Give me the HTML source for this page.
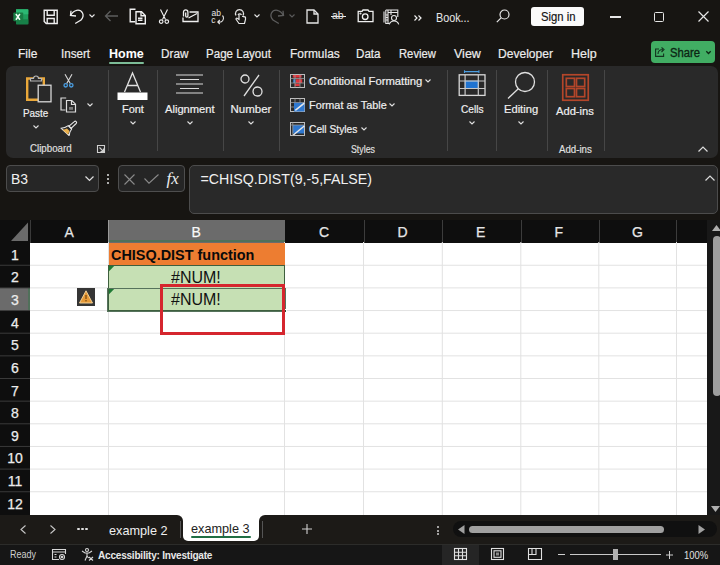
<!DOCTYPE html>
<html><head><meta charset="utf-8">
<style>
*{margin:0;padding:0;box-sizing:border-box}
html,body{width:720px;height:565px;overflow:hidden;background:#171512;font-family:"Liberation Sans",sans-serif;color:#e8e8e8}
.a{position:absolute}
.t{position:absolute;white-space:nowrap;line-height:1;transform-origin:0 0}
svg{position:absolute;overflow:visible}
.tab{font-size:12.5px;color:#ececec;top:48px;-webkit-text-stroke:.2px #ececec}
.rl{font-size:11.5px;color:#efefef;-webkit-text-stroke:.2px #efefef}
.gl{font-size:11px;color:#e2e2e2;-webkit-text-stroke:.15px #e2e2e2}
.sep{position:absolute;width:1px;background:#464646;top:70px;height:81px}
.ch{font-size:14px;color:#e6e6e6;top:225px;-webkit-text-stroke:.25px #e6e6e6}
.rh{position:absolute;left:0;width:30px;font-size:14px;color:#ececec;text-align:center;line-height:22.65px;padding-top:1px;-webkit-text-stroke:.25px #ececec}
</style></head><body>

<!-- ============ TITLE BAR ============ -->
<!-- excel logo -->
<svg style="left:13px;top:8.5px" width="16" height="16" viewBox="0 0 16 16">
  <rect x="3" y="0.3" width="12.3" height="15" rx="1" fill="#1f9d5c"/>
  <rect x="3" y="0.3" width="12.3" height="5" fill="#2cb873"/>
  <rect x="3" y="10.3" width="12.3" height="5" fill="#178048"/>
  <rect x="0.3" y="3.5" width="9.9" height="8.8" rx="1" fill="#1a7d45"/>
  <path d="M2.9 5l4 5.8M6.9 5l-4 5.8" stroke="#f4fff8" stroke-width="1.5"/>
</svg>
<!-- save -->
<svg style="left:42.5px;top:8.5px" width="16" height="16" viewBox="0 0 16 16" fill="none" stroke="#f0f0f0" stroke-width="1.4">
  <path d="M1.2 1.2h13v13.3H3.2l-2-2z"/><path d="M4.2 1.2v5h7v-5"/><path d="M4.2 14.5V9.5h7v5"/>
</svg>
<!-- undo -->
<svg style="left:69px;top:8px" width="16" height="17" viewBox="0 0 16 17" fill="none" stroke="#f0f0f0" stroke-width="1.3">
  <path d="M2 2.8L1.5 7.5 7 8"/><path d="M1.8 7.3C4.5 1.5 11 .5 13.5 5c1.3 2.5.3 5-1.5 7l-5.8 3.5"/>
</svg>
<svg style="left:89px;top:14px" width="6" height="4" viewBox="0 0 6 4" fill="none" stroke="#e6e6e6" stroke-width="1.1"><path d="M.5.5l2.5 2.5 2.5-2.5"/></svg>
<!-- back arrow dim -->
<svg style="left:104px;top:10px" width="15" height="12" viewBox="0 0 15 12" fill="none" stroke="#5e5e5e" stroke-width="1.3"><path d="M14 6H1.5M6.5 1L1.5 6l5 5"/></svg>
<!-- copy -->
<svg style="left:129px;top:8px" width="18" height="17" viewBox="0 0 18 17" fill="none" stroke="#f0f0f0" stroke-width="1.4">
  <path d="M6.5 1.2H1.2v12.5h5"/><path d="M7 3.8h5.5l3.8 3.8v8.2H7z"/><path d="M12 3.8v4h4"/><path d="M9 10.3h4.5M9 12.3h4.5"/>
</svg>
<!-- scissors -->
<svg style="left:159px;top:9px" width="10" height="15" viewBox="0 0 10 15" fill="none" stroke="#f0f0f0" stroke-width="1.15">
  <path d="M1.5 .5l5 10M8.5 .5l-5 10"/><circle cx="2.2" cy="12.6" r="1.8"/><circle cx="7.8" cy="12.6" r="1.8"/>
</svg>
<!-- mail attach -->
<svg style="left:182px;top:8.5px" width="17" height="14" viewBox="0 0 17 14" fill="none" stroke="#f0f0f0" stroke-width="1.3">
  <path d="M7.5 3H16v9.5H1V8.5"/><path d="M6.5 9l8.5-4.5"/><path d="M1.5 7.5V3a2.2 2.2 0 014.4 0v4a1.1 1.1 0 01-2.2 0V3.5"/>
</svg>
<!-- spell ab -->
<svg style="left:211px;top:9px" width="14" height="15" viewBox="0 0 14 15">
  <text x="0.5" y="7" font-size="8.5" fill="#e6e6e6" font-family="Liberation Sans">ab</text>
  <text x="0.3" y="14" font-size="8.5" fill="#e6e6e6" font-family="Liberation Sans">c</text>
  <path d="M11.5 6.5c1.5 1.5 1.5 5-1.5 6.5H7M8.8 11l-2 2 2 2" fill="none" stroke="#e6e6e6" stroke-width="1.1"/>
</svg>
<!-- touch -->
<svg style="left:234px;top:9px" width="12" height="15" viewBox="0 0 12 15" fill="none" stroke="#e6e6e6" stroke-width="1.2">
  <path d="M2 6.5a4 4 0 117 0"/><path d="M4 6a2 2 0 013.5 0"/><path d="M5 5.5v5l-1.5-1c-1-.8-2 .2-1.3 1L5 14.5h5.5l1-4V8.5c0-1-1.5-1-1.5 0V8c0-1-1.5-1-1.5 0"/>
</svg>
<svg style="left:254px;top:14px" width="6" height="4" viewBox="0 0 6 4" fill="none" stroke="#e6e6e6" stroke-width="1.1"><path d="M.5.5l2.5 2.5 2.5-2.5"/></svg>
<!-- redo dim -->
<svg style="left:268.5px;top:8px" width="16" height="17" viewBox="0 0 16 17" fill="none" stroke="#5c5c5c" stroke-width="1.3">
  <path d="M14 2.8l.5 4.7L9 8"/><path d="M14.2 7.3C11.5 1.5 5 .5 2.5 5c-1.3 2.5-.3 5 1.5 7l5.8 3.5"/>
</svg>
<svg style="left:289px;top:14px" width="6" height="4" viewBox="0 0 6 4" fill="none" stroke="#5a5a5a" stroke-width="1.1"><path d="M.5.5l2.5 2.5 2.5-2.5"/></svg>
<!-- new doc -->
<svg style="left:306px;top:9px" width="13" height="15" viewBox="0 0 13 15" fill="none" stroke="#e6e6e6" stroke-width="1.3">
  <path d="M1 1h7l4 4v9H1z"/><path d="M8 1v4h4"/>
</svg>
<!-- strikethrough ab -->
<div class="t" style="left:332px;top:10px;font-size:10.5px;color:#e6e6e6">ab</div>
<div class="a" style="left:330.5px;top:16px;width:15px;height:1.2px;background:#e6e6e6"></div>
<!-- camera -->
<svg style="left:356.5px;top:9px" width="17" height="14" viewBox="0 0 17 14" fill="none" stroke="#f0f0f0" stroke-width="1.3">
  <path d="M1.2 2.3h3.8l1-1.3h5l1 1.3h4v10.3H1.2z"/><circle cx="8.2" cy="7.7" r="2.8"/><circle cx="3.5" cy="4.5" r=".4" fill="#f0f0f0"/>
</svg>
<!-- form person -->
<svg style="left:383px;top:8.5px" width="17" height="16" viewBox="0 0 17 16" fill="none" stroke="#e8e8e8" stroke-width="1.1">
  <path d="M1 2.5v11M2.8 1v13.5h3.5"/><path d="M2.8 1h12v7"/><path d="M5 1v13.5M5 3.5h9.8M8 1v5M2.8 6h2.2M2.8 8.5h2.2M2.8 11h2.2"/>
  <circle cx="11" cy="9" r="2.5"/><path d="M6.3 15.3c.7-2.2 2.5-3.3 4.7-3.3s4 1.1 4.7 3.3"/>
</svg>
<svg style="left:414px;top:15px" width="8" height="6" viewBox="0 0 8 6" fill="none" stroke="#f0f0f0" stroke-width="1.2"><path d="M.5.5L3 3 .5 5.5M4.5.5L7 3 4.5 5.5"/></svg>
<div class="t" style="left:435.5px;top:12px;font-size:12px;color:#e6e6e6;transform:scaleX(.9)">Book...</div>
<!-- search -->
<svg style="left:496px;top:9px" width="14" height="14" viewBox="0 0 14 14" fill="none" stroke="#e6e6e6" stroke-width="1.2">
  <circle cx="8.5" cy="5.5" r="4.5"/><path d="M5.3 8.7L.8 13.2"/>
</svg>
<!-- sign in -->
<div class="a" style="left:531px;top:7px;width:53px;height:19px;background:#fafafa;border-radius:3px"></div>
<div class="t" style="left:540.5px;top:11px;font-size:12px;color:#111;transform:scaleX(.94);-webkit-text-stroke:.15px #111">Sign in</div>
<!-- window controls -->
<div class="a" style="left:610px;top:16px;width:10.5px;height:1.7px;background:#e6e6e6"></div>
<div class="a" style="left:654px;top:12px;width:10px;height:10px;border:1.2px solid #e6e6e6;border-radius:1.5px"></div>
<svg style="left:698px;top:11px" width="11" height="11" viewBox="0 0 11 11" fill="none" stroke="#e6e6e6" stroke-width="1.2"><path d="M.5.5l10 10M10.5.5l-10 10"/></svg>

<!-- ============ TABS ============ -->
<div class="t tab" style="left:18px;transform:scaleX(.96)">File</div>
<div class="t tab" style="left:61px;transform:scaleX(0.93)">Insert</div>
<div class="t tab" style="left:109px;font-weight:bold;color:#fff;-webkit-text-stroke:0">Home</div>
<div class="a" style="left:109px;top:61.5px;width:35px;height:2px;background:#7dbd98;border-radius:1px"></div>
<div class="t tab" style="left:160.5px;transform:scaleX(0.94)">Draw</div>
<div class="t tab" style="left:206px;transform:scaleX(0.925)">Page Layout</div>
<div class="t tab" style="left:290px;transform:scaleX(0.955)">Formulas</div>
<div class="t tab" style="left:356px;transform:scaleX(0.93)">Data</div>
<div class="t tab" style="left:399px;transform:scaleX(0.9)">Review</div>
<div class="t tab" style="left:454px">View</div>
<div class="t tab" style="left:498px;transform:scaleX(0.965)">Developer</div>
<div class="t tab" style="left:571px">Help</div>
<!-- share -->
<div class="a" style="left:651px;top:41px;width:63.5px;height:22px;background:#41ad63;border-radius:4px"></div>
<svg style="left:655px;top:46px" width="11" height="11" viewBox="0 0 11 11" fill="none" stroke="#13341f" stroke-width="1.1">
  <path d="M4 3H.6v7.4h8V7.5"/><path d="M3 8c0-3 2-4.5 5-4.5M6.5 1.5L9 3.5 6.5 6"/>
</svg>
<div class="t" style="left:669.5px;top:46.5px;font-size:12.5px;color:#0c2614;transform:scaleX(.9);-webkit-text-stroke:.35px #0c2614">Share</div>
<svg style="left:705.5px;top:50.5px" width="6" height="4" viewBox="0 0 6 4" fill="none" stroke="#0c2614" stroke-width="1.3"><path d="M.3.3l2.2 2.2L4.7.3"/></svg>

<!-- ============ RIBBON ============ -->
<div class="a" style="left:6px;top:66px;width:711.5px;height:91.5px;background:#292929;border-radius:7px"></div>

<!-- Clipboard group -->
<svg style="left:25px;top:74px" width="27" height="29" viewBox="0 0 27 29" fill="none">
  <path d="M2.2 4.5h16.6v21.3H2.2z" stroke="#eaa83a" stroke-width="2.4"/>
  <path d="M5.5 7V4.5h3a2.5 2.5 0 015 0h3V7z" stroke="#b8b8b8" stroke-width="1.2" fill="#292929"/>
  <rect x="13.2" y="11.2" width="12.8" height="16.6" stroke="#d8d8d8" stroke-width="1.3" fill="#292929"/>
</svg>
<div class="t rl" style="left:23px;top:108px;transform:scaleX(.86)">Paste</div>
<svg style="left:33px;top:125px" width="6" height="4" viewBox="0 0 6 4" fill="none" stroke="#e0e0e0" stroke-width="1.1"><path d="M.5.5l2.5 2.5 2.5-2.5"/></svg>
<svg style="left:63px;top:74px" width="11" height="14" viewBox="0 0 11 14" fill="none">
  <path d="M2 .3l5.3 9.2M9 .3L3.7 9.5" stroke="#d8d8d8" stroke-width="1.1"/>
  <circle cx="2.7" cy="11.3" r="1.7" stroke="#4a9de0" stroke-width="1.3"/><circle cx="8.3" cy="11.3" r="1.7" stroke="#4a9de0" stroke-width="1.3"/>
</svg>
<svg style="left:60px;top:97px" width="17" height="16" viewBox="0 0 17 16" fill="none" stroke="#dedede" stroke-width="1.2">
  <path d="M6.2 1H1v12h4.5"/><path d="M6.5 3.5h5.3l3.7 3.7v7.8h-9z"/><path d="M11.5 3.5v4h4"/><rect x="9" y="10" width="4" height="2.8" fill="#7a7a7a" stroke="none"/>
</svg>
<svg style="left:86.5px;top:103px" width="6" height="4" viewBox="0 0 6 4" fill="none" stroke="#e0e0e0" stroke-width="1.1"><path d="M.5.5l2.5 2.5 2.5-2.5"/></svg>
<svg style="left:60px;top:120.5px" width="17" height="15" viewBox="0 0 17 15" fill="none">
  <path d="M1 7.2c3 0 5.5-1.2 7.3-2.6l3.4 3.4c-1.4 1.8-2.6 4.3-2.6 6.5z" fill="#292929" stroke="#e8e8e8" stroke-width="1.1" stroke-linejoin="round"/>
  <path d="M2.5 8.8c2.2-.3 3.5-.8 4.5-1.3l2.5 2.5c-.5 1-1 2.3-1.3 3.8z" fill="#eab04c"/>
  <path d="M9 5.2l5.3-4.6a1.3 1.3 0 011.9 1.9L11.1 7.3z" stroke="#e8e8e8" stroke-width="1.1" stroke-linejoin="round"/>
</svg>
<div class="t gl" style="left:29.5px;top:143px;transform:scaleX(.885)">Clipboard</div>
<svg style="left:96.5px;top:145px" width="8" height="8" viewBox="0 0 8 8" fill="none" stroke="#d0d0d0" stroke-width="1.1">
  <path d="M.5 7.5V.5h7v7z"/><path d="M2.5 2.5l4 4M3.5 6.5h3v-3"/>
</svg>
<div class="sep" style="left:107.5px"></div>

<!-- Font group -->
<svg style="left:117px;top:72px" width="31" height="28" viewBox="0 0 31 28" fill="none">
  <path d="M7.5 20L15.5 1l8 19M10.5 13.5h10" stroke="#e0e0e0" stroke-width="1.3"/>
  <rect x="0.5" y="20.5" width="30" height="7.5" fill="#ffffff"/>
</svg>
<div class="t rl" style="left:121.5px;top:103.5px;transform:scaleX(.95)">Font</div>
<svg style="left:129.5px;top:121px" width="6" height="4" viewBox="0 0 6 4" fill="none" stroke="#e0e0e0" stroke-width="1.1"><path d="M.5.5l2.5 2.5 2.5-2.5"/></svg>
<div class="sep" style="left:157px"></div>

<!-- Alignment group -->
<svg style="left:176px;top:74px" width="27" height="21" viewBox="0 0 27 21" fill="none" stroke="#dcdcdc" stroke-width="1.2">
  <path d="M0 1h27M4 5.5h19M0 10h27M4 14.5h19M0 19h27"/>
</svg>
<div class="t rl" style="left:164.5px;top:103.5px;transform:scaleX(.97)">Alignment</div>
<svg style="left:186.5px;top:121px" width="6" height="4" viewBox="0 0 6 4" fill="none" stroke="#e0e0e0" stroke-width="1.1"><path d="M.5.5l2.5 2.5 2.5-2.5"/></svg>
<div class="sep" style="left:223px"></div>

<!-- Number group -->
<svg style="left:240px;top:74px" width="23" height="23" viewBox="0 0 23 23" fill="none" stroke="#e0e0e0" stroke-width="1.3">
  <circle cx="5" cy="5" r="4"/><circle cx="17.5" cy="17.5" r="4.5"/><path d="M19 1L4 22"/>
</svg>
<div class="t rl" style="left:230.5px;top:103.5px">Number</div>
<svg style="left:248px;top:121px" width="6" height="4" viewBox="0 0 6 4" fill="none" stroke="#e0e0e0" stroke-width="1.1"><path d="M.5.5l2.5 2.5 2.5-2.5"/></svg>
<div class="sep" style="left:279px"></div>

<!-- Styles group -->
<svg style="left:290px;top:74px" width="15" height="14" viewBox="0 0 15 14" fill="none">
  <rect x="2.8" y="1" width="8.7" height="2.6" fill="#e0333a"/><rect x="5.9" y="5.2" width="6.3" height="3.8" fill="#e0333a"/>
  <rect x="3.3" y="5.2" width="2" height="3.8" fill="#3d8ee0"/><rect x="4.7" y="9.6" width="5" height="2.6" fill="#e0333a"/>
  <rect x=".5" y=".5" width="14" height="13" stroke="#bdbdbd" stroke-width="1"/>
  <path d="M.5 4.5h14M.5 9h14M5 .5v13M10 .5v13" stroke="#9a9a9a" stroke-width=".8"/>
</svg>
<div class="t rl" style="left:308.5px;top:76px;transform:scaleX(.98)">Conditional Formatting</div>
<svg style="left:425px;top:79px" width="6" height="4" viewBox="0 0 6 4" fill="none" stroke="#e0e0e0" stroke-width="1.1"><path d="M.5.5l2.5 2.5 2.5-2.5"/></svg>
<svg style="left:290px;top:98px" width="15" height="14" viewBox="0 0 15 14" fill="none">
  <rect x=".5" y=".5" width="14" height="13" stroke="#bdbdbd" stroke-width="1"/>
  <path d="M.5 4.5h14M.5 9h14M5 .5v13M10 .5v13" stroke="#9a9a9a" stroke-width=".8"/>
  <path d="M4 4.8h10.5v8.7H4z" fill="#2f78cf"/><path d="M5.3 12.3l9-7.2" stroke="#e8e8e8" stroke-width="1.5"/>
</svg>
<div class="t rl" style="left:308.5px;top:100px;transform:scaleX(.945)">Format as Table</div>
<svg style="left:388.5px;top:103px" width="6" height="4" viewBox="0 0 6 4" fill="none" stroke="#e0e0e0" stroke-width="1.1"><path d="M.5.5l2.5 2.5 2.5-2.5"/></svg>
<svg style="left:290px;top:122px" width="15" height="14" viewBox="0 0 15 14" fill="none">
  <path d="M2.8 3h11.7v8.5H2.8z" fill="#2f78cf"/>
  <rect x=".5" y=".5" width="14" height="13" stroke="#bdbdbd" stroke-width="1"/>
  <path d="M.5 3h14M2.8.5v13" stroke="#9a9a9a" stroke-width=".8"/>
  <path d="M3.3 13l11-9" stroke="#e8e8e8" stroke-width="1.5"/>
</svg>
<div class="t rl" style="left:308.5px;top:124px;transform:scaleX(.89)">Cell Styles</div>
<svg style="left:360.5px;top:127px" width="6" height="4" viewBox="0 0 6 4" fill="none" stroke="#e0e0e0" stroke-width="1.1"><path d="M.5.5l2.5 2.5 2.5-2.5"/></svg>
<div class="t gl" style="left:350.5px;top:143.5px;transform:scaleX(.8)">Styles</div>
<div class="sep" style="left:446.5px"></div>

<!-- Cells group -->
<svg style="left:458px;top:70px" width="28" height="27" viewBox="0 0 28 27" fill="none">
  <path d="M6.5 1.6h14.4M6.5.3v2.6M20.9.3v2.6" stroke="#4a9de0" stroke-width="1.1"/>
  <rect x="7.1" y="11" width="13.2" height="7.5" fill="#1f73d0" stroke="#6fb0f0" stroke-width=".8"/>
  <rect x="1.2" y="4.8" width="25.8" height="20.6" stroke="#d8d8d8" stroke-width="1.3"/>
  <path d="M1.2 11h25.8M1.2 18.5h25.8M7.1 4.8v20.6M20.3 4.8v20.6" stroke="#c8c8c8" stroke-width="1.2"/>
</svg>
<div class="t rl" style="left:460.5px;top:104px;transform:scaleX(.88)">Cells</div>
<svg style="left:468.5px;top:121px" width="6" height="4" viewBox="0 0 6 4" fill="none" stroke="#e0e0e0" stroke-width="1.1"><path d="M.5.5l2.5 2.5 2.5-2.5"/></svg>
<div class="sep" style="left:496px"></div>

<!-- Editing group -->
<svg style="left:507px;top:72px" width="29" height="27" viewBox="0 0 29 27" fill="none" stroke="#e0e0e0" stroke-width="1.3">
  <circle cx="18" cy="10" r="9.5"/><path d="M11.3 16.7L1 26.5"/>
</svg>
<div class="t rl" style="left:504px;top:103.5px;transform:scaleX(.97)">Editing</div>
<svg style="left:518px;top:121px" width="6" height="4" viewBox="0 0 6 4" fill="none" stroke="#e0e0e0" stroke-width="1.1"><path d="M.5.5l2.5 2.5 2.5-2.5"/></svg>
<div class="sep" style="left:546.5px"></div>

<!-- Add-ins group -->
<svg style="left:562px;top:73.5px" width="27" height="27" viewBox="0 0 27 27" fill="none" stroke="#b4462a" stroke-width="1.7">
  <rect x=".75" y=".75" width="25.5" height="25.5"/><rect x="4.3" y="4.3" width="8.2" height="8.2"/><rect x="14.5" y="4.3" width="8.2" height="8.2"/><rect x="4.3" y="14.5" width="8.2" height="8.2"/><rect x="14.5" y="14.5" width="8.2" height="8.2"/>
</svg>
<div class="t rl" style="left:556px;top:105.5px;transform:scaleX(.97)">Add-ins</div>
<div class="t gl" style="left:558.5px;top:143.5px;transform:scaleX(.88)">Add-ins</div>
<div class="sep" style="left:603.5px"></div>
<svg style="left:697.5px;top:145.5px" width="10" height="6" viewBox="0 0 10 6" fill="none" stroke="#dcdcdc" stroke-width="1.2"><path d="M.5 5.5L5 1l4.5 4.5"/></svg>

<!-- ============ FORMULA BAR ============ -->
<div class="a" style="left:6px;top:165px;width:92.5px;height:26.5px;background:#262626;border:1px solid #4c4c4c;border-radius:4px"></div>
<div class="t" style="left:10.5px;top:171px;font-size:15px;color:#f0f0f0;transform:scaleX(.93)">B3</div>
<svg style="left:85px;top:175.5px" width="9" height="5" viewBox="0 0 9 5" fill="none" stroke="#e0e0e0" stroke-width="1.2"><path d="M.5.5l4 4 4-4"/></svg>
<div class="a" style="left:107px;top:174px;width:2px;height:2px;background:#e0e0e0;border-radius:1px"></div>
<div class="a" style="left:107px;top:178px;width:2px;height:2px;background:#e0e0e0;border-radius:1px"></div>
<div class="a" style="left:107px;top:182px;width:2px;height:2px;background:#e0e0e0;border-radius:1px"></div>
<div class="a" style="left:117.5px;top:165px;width:67.5px;height:27px;background:#252525;border:1px solid #4e4e4e;border-radius:4px"></div>
<svg style="left:123.5px;top:173.5px" width="11" height="11" viewBox="0 0 11 11" fill="none" stroke="#8a8a8a" stroke-width="1.1"><path d="M.5.5l10 10M10.5.5l-10 10"/></svg>
<svg style="left:143.5px;top:173.5px" width="15" height="10" viewBox="0 0 15 10" fill="none" stroke="#8a8a8a" stroke-width="1.1"><path d="M.5 4.5l4.5 4.7L14.5.5"/></svg>
<div class="t" style="left:166.5px;top:169.5px;font-size:17px;color:#ececec;font-family:'Liberation Serif',serif;font-style:italic">fx</div>
<div class="a" style="left:189px;top:165px;width:529px;height:49px;background:#292929;border:1px solid #4c4c4c;border-radius:5px"></div>
<div class="t" style="left:200.5px;top:171.5px;font-size:14.2px;color:#f0f0f0">=CHISQ.DIST(9,-5,FALSE)</div>
<svg style="left:705px;top:174.5px" width="10" height="6" viewBox="0 0 10 6" fill="none" stroke="#dcdcdc" stroke-width="1.2"><path d="M.5 5.5L5 1l4.5 4.5"/></svg>

<!-- ============ GRID ============ -->
<div class="a" style="left:0;top:220px;width:707px;height:295px;background:#fff"></div>
<!-- column header band -->
<div class="a" style="left:0;top:220px;width:707px;height:22.5px;background:#0e0e0e"></div>
<!-- select-all triangle -->
<svg style="left:0;top:220px" width="30" height="22" viewBox="0 0 30 22"><path d="M28 2.5V21H11z" fill="#6a6a6a"/></svg>
<div class="a" style="left:29.5px;top:220px;width:1px;height:22.5px;background:#3a3a3a"></div>
<!-- B header selected -->
<div class="a" style="left:108px;top:220px;width:176.5px;height:22.5px;background:#6b6b6b"></div>
<div class="a" style="left:108px;top:240.2px;width:176.5px;height:2.3px;background:#50705a"></div>
<div class="a" style="left:108px;top:220px;width:1px;height:22.5px;background:#9a9a9a"></div>
<div class="a" style="left:363.5px;top:220px;width:1px;height:22.5px;background:#3c3c3c"></div>
<div class="a" style="left:442px;top:220px;width:1px;height:22.5px;background:#3c3c3c"></div>
<div class="a" style="left:520.5px;top:220px;width:1px;height:22.5px;background:#3c3c3c"></div>
<div class="a" style="left:598.5px;top:220px;width:1px;height:22.5px;background:#3c3c3c"></div>
<div class="a" style="left:676px;top:220px;width:1px;height:22.5px;background:#3c3c3c"></div>
<div class="t ch" style="left:64.5px">A</div>
<div class="t ch" style="left:191.5px;color:#fff">B</div>
<div class="t ch" style="left:319px">C</div>
<div class="t ch" style="left:397.5px">D</div>
<div class="t ch" style="left:476px">E</div>
<div class="t ch" style="left:554.5px">F</div>
<div class="t ch" style="left:632px">G</div>

<!-- row header band -->
<div class="a" style="left:0;top:242.5px;width:30px;height:272.5px;background:#0e0e0e"></div>
<div class="a" style="left:0;top:288px;width:30px;height:22.6px;background:#6b6b6b"></div>
<div class="a" style="left:28px;top:288px;width:2px;height:22.6px;background:#50705a"></div>

<!-- gridlines horizontal -->
<svg style="left:0;top:242px" width="708" height="273" viewBox="0 0 708 273">
  <g stroke="#e2e2e2" stroke-width="1">
    <path d="M30 23.25H708M30 45.90H708M30 68.55H708M30 91.20H708M30 113.85H708M30 136.50H708M30 159.15H708M30 181.80H708M30 204.45H708M30 227.10H708M30 249.75H708"/>
    <path d="M108.5 0V273M284.5 0V273M363.5 0V273M442.3 0V273M520.8 0V273M598.8 0V273M676.5 0V273"/>
  </g>
  <g stroke="#3a3a3a" stroke-width="1">
    <path d="M0 23.25H30M0 45.90H30M0 68.55H30M0 91.20H30M0 113.85H30M0 136.50H30M0 159.15H30M0 181.80H30M0 204.45H30M0 227.10H30M0 249.75H30"/>
  </g>
</svg>
<!-- row numbers -->
<div class="rh" style="top:242.60px">1</div>
<div class="rh" style="top:265.25px">2</div>
<div class="rh" style="top:287.90px">3</div>
<div class="rh" style="top:310.55px">4</div>
<div class="rh" style="top:333.20px">5</div>
<div class="rh" style="top:355.85px">6</div>
<div class="rh" style="top:378.50px">7</div>
<div class="rh" style="top:401.15px">8</div>
<div class="rh" style="top:423.80px">9</div>
<div class="rh" style="top:446.45px">10</div>
<div class="rh" style="top:469.10px">11</div>
<div class="rh" style="top:491.75px">12</div>

<!-- cells -->
<div class="a" style="left:108.5px;top:242.5px;width:176px;height:22.5px;background:#ed7d31"></div>
<div class="t" style="left:111px;top:248px;font-size:14px;font-weight:bold;color:#0a0a0a;transform:scaleX(1.03)">CHISQ.DIST function</div>
<div class="a" style="left:108px;top:265px;width:177px;height:46px;background:#c6e0b4;border:1px solid #3e5f3e"></div>
<div class="a" style="left:108px;top:287.5px;width:177px;height:1px;background:#a5bd96"></div>
<div class="t" style="left:171px;top:268.5px;font-size:17px;color:#111;transform:scaleX(.94)">#NUM!</div>
<div class="t" style="left:171px;top:291px;font-size:17px;color:#111;transform:scaleX(.94)">#NUM!</div>
<svg style="left:108.5px;top:265.5px" width="7" height="7" viewBox="0 0 7 7"><path d="M0 0h5.2L0 5.2z" fill="#1e7a34"/></svg>
<svg style="left:108.5px;top:288.5px" width="7" height="7" viewBox="0 0 7 7"><path d="M0 0h5.2L0 5.2z" fill="#1e7a34"/></svg>
<!-- selection border B3 -->
<div class="a" style="left:107px;top:287.5px;width:178.5px;height:24px;border:1.5px solid #56735c"></div>
<div class="a" style="left:283px;top:308.5px;width:4px;height:4px;background:#2f4a35;border:1px solid #fff"></div>
<!-- warning icon -->
<div class="a" style="left:77px;top:288px;width:18px;height:18px;background:#353535"></div>
<svg style="left:78.5px;top:290px" width="14" height="14" viewBox="0 0 14 14">
  <path d="M7 .8L13.5 13H.5z" fill="#e69a38" stroke="#f7d9a0" stroke-width=".9"/>
  <path d="M7 5v4" stroke="#7a4a10" stroke-width="1.3"/><circle cx="7" cy="10.8" r=".8" fill="#7a4a10"/>
</svg>
<!-- red box -->
<div class="a" style="left:160px;top:283.5px;width:124.5px;height:51.5px;border:3px solid #d5262e"></div>

<!-- vertical scrollbar -->
<div class="a" style="left:707px;top:220px;width:13px;height:295px;background:#181818"></div>
<svg style="left:711.5px;top:225px" width="9" height="6" viewBox="0 0 9 6"><path d="M4.5 0L9 6H0z" fill="#b0b0b0"/></svg>
<div class="a" style="left:712.5px;top:236px;width:8px;height:160px;background:#9e9e9e;border-radius:4px"></div>
<svg style="left:711px;top:506px" width="9" height="6" viewBox="0 0 9 6"><path d="M4.5 6L9 0H0z" fill="#b0b0b0"/></svg>

<!-- ============ SHEET TABS ============ -->
<div class="a" style="left:170px;top:514px;width:100px;height:10px;background:#fff"></div>
<div class="a" style="left:0;top:514.5px;width:183px;height:30px;background:#1c1a17;border-top-right-radius:6px"></div>
<div class="a" style="left:258.5px;top:514.5px;width:461.5px;height:30px;background:#1c1a17;border-top-left-radius:6px"></div>
<div class="a" style="left:183px;top:535px;width:76px;height:10px;background:#1c1a17"></div>
<svg style="left:20px;top:525px" width="6" height="9" viewBox="0 0 6 9" fill="none" stroke="#c8c8c8" stroke-width="1.1"><path d="M5.5.5l-4.5 4 4.5 4"/></svg>
<svg style="left:50px;top:525px" width="6" height="9" viewBox="0 0 6 9" fill="none" stroke="#c8c8c8" stroke-width="1.1"><path d="M.5.5l4.5 4-4.5 4"/></svg>
<div class="a" style="left:77px;top:527.5px;width:2.5px;height:2.5px;background:#e0e0e0;border-radius:1px"></div>
<div class="a" style="left:81px;top:527.5px;width:2.5px;height:2.5px;background:#e0e0e0;border-radius:1px"></div>
<div class="a" style="left:85px;top:527.5px;width:2.5px;height:2.5px;background:#e0e0e0;border-radius:1px"></div>
<div class="t" style="left:109px;top:523.5px;font-size:13.5px;color:#f0f0f0;transform:scaleX(.94)">example 2</div>
<div class="a" style="left:179.5px;top:521px;width:1px;height:17px;background:#555"></div>
<!-- active tab -->
<div class="a" style="left:183px;top:510px;width:75.5px;height:30.5px;background:#fff;border-radius:0 0 5px 5px"></div>
<div class="t" style="left:190.5px;top:521.7px;font-size:13.5px;color:#222;transform:scaleX(.94)">example 3</div>
<div class="a" style="left:190.5px;top:536px;width:60px;height:2px;background:#1f6e43;border-radius:1px"></div>
<div class="a" style="left:261.5px;top:521px;width:1px;height:17px;background:#555"></div>
<svg style="left:301.5px;top:524px" width="10" height="10" viewBox="0 0 10 10" fill="none" stroke="#d0d0d0" stroke-width="1.1"><path d="M5 0v10M0 5h10"/></svg>
<div class="a" style="left:437px;top:525.5px;width:2px;height:2px;background:#d0d0d0;border-radius:1px"></div>
<div class="a" style="left:437px;top:529.5px;width:2px;height:2px;background:#d0d0d0;border-radius:1px"></div>
<div class="a" style="left:437px;top:533px;width:2px;height:2px;background:#d0d0d0;border-radius:1px"></div>
<div class="a" style="left:453px;top:521px;width:264px;height:16px;background:#101010;border-radius:8px"></div>
<svg style="left:457.5px;top:525px" width="7" height="9" viewBox="0 0 7 9"><path d="M0 4.5L6.5 0v9z" fill="#a0a0a0"/></svg>
<div class="a" style="left:469px;top:525.5px;width:195px;height:7px;background:#a0a0a0;border-radius:3.5px"></div>
<svg style="left:697.5px;top:525px" width="7" height="9" viewBox="0 0 7 9"><path d="M7 4.5L.5 0v9z" fill="#a0a0a0"/></svg>

<!-- ============ STATUS BAR ============ -->
<div class="a" style="left:0;top:544px;width:720px;height:21px;background:#161616;border-top:1px solid #2c2c2a"></div>
<div class="t" style="left:9.5px;top:550px;font-size:10px;color:#cfcfcf;transform:scaleX(.9)">Ready</div>
<svg style="left:52px;top:549px" width="14" height="11" viewBox="0 0 14 11" fill="none" stroke="#d8d8d8" stroke-width="1.1">
  <path d="M7 10.5H.5V.5h13V5"/><path d="M.5 3h13M2.5 5.5h2M2.5 8h2"/><circle cx="10" cy="8" r="2.5"/><circle cx="10" cy="8" r=".8" fill="#d8d8d8"/>
</svg>
<svg style="left:81px;top:547.5px" width="13" height="13" viewBox="0 0 13 13" fill="none" stroke="#d8d8d8" stroke-width="1.1">
  <circle cx="6" cy="2" r="1.5"/><path d="M1 3l3 2h4l3-2M6 5v3l-2 4.5M6 8l1.5 2M8 9l4 3.5M12 9l-4 3.5"/>
</svg>
<div class="t" style="left:98px;top:549.5px;font-size:10.5px;color:#e8e8e8;font-weight:bold;letter-spacing:-0.25px;transform:scaleX(.96)">Accessibility: Investigate</div>
<div class="a" style="left:442px;top:544.5px;width:37px;height:20.5px;background:#252525"></div>
<svg style="left:454px;top:548px" width="13" height="12" viewBox="0 0 13 12" fill="none" stroke="#e0e0e0" stroke-width="1.1">
  <rect x=".5" y=".5" width="12" height="11"/><path d="M4.5.5v11M8.5.5v11M.5 4.2h12M.5 7.8h12"/>
</svg>
<svg style="left:491px;top:548px" width="13" height="12" viewBox="0 0 13 12" fill="none" stroke="#e0e0e0" stroke-width="1.1">
  <rect x=".5" y=".5" width="12" height="11"/><rect x="3" y="2.8" width="7" height="6.5"/><rect x="5" y="4.5" width="3" height="3" fill="#888" stroke="none"/>
</svg>
<svg style="left:527.5px;top:548px" width="14" height="12" viewBox="0 0 14 12" fill="none" stroke="#e0e0e0" stroke-width="1.1">
  <path d="M.5 11.5V.5h13v11zM4 .5v6M8 .5v6H.5"/>
</svg>
<div class="a" style="left:557.5px;top:554px;width:7px;height:1px;background:#d0d0d0"></div>
<div class="a" style="left:570px;top:554px;width:91px;height:1px;background:#c8c8c8"></div>
<div class="a" style="left:613px;top:549px;width:5px;height:10.5px;background:#b0b0b0"></div>
<svg style="left:666px;top:550.5px" width="7" height="8" viewBox="0 0 7 8" fill="none" stroke="#d0d0d0" stroke-width="1"><path d="M3.5 0v8M0 4h7"/></svg>
<div class="t" style="left:684px;top:550px;font-size:10.5px;color:#e0e0e0;transform:scaleX(.9)">100%</div>

</body></html>
